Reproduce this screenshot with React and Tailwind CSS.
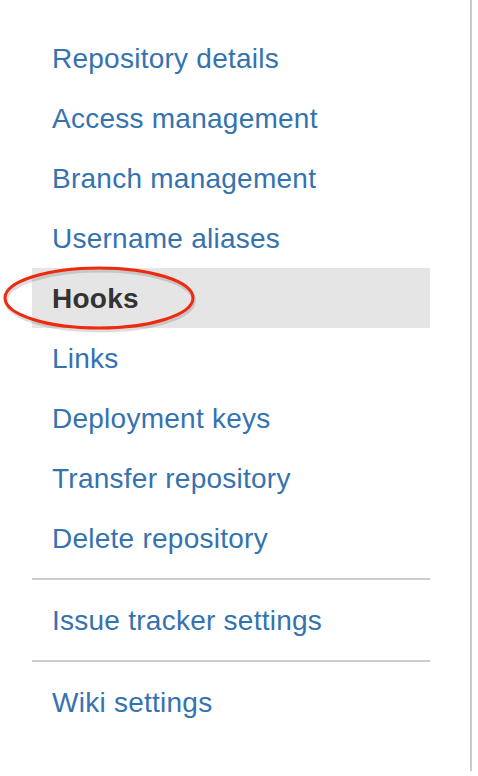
import React from "react";

const items = [
  "Repository details",
  "Access management",
  "Branch management",
  "Username aliases",
  "Hooks",
  "Links",
  "Deployment keys",
  "Transfer repository",
  "Delete repository",
];

function NavItem({ label, active }) {
  return (
    <li
      className={
        "h-[60px] flex items-center pl-5 pt-[2px] " +
        (active ? "bg-[#e5e5e5] font-bold text-[#333333]" : "text-[#3572b0]")
      }
    >
      {label}
    </li>
  );
}

export default function App() {
  return (
    <div className="min-h-screen bg-white" style={{ fontFamily: '"Liberation Sans", Arial, sans-serif' }}>
      <div className="w-[472px] h-[771px] border-r-2 border-[#cccccc] relative">
        <div className="ml-8 w-[398px] pt-7 text-[28px] leading-none tracking-[0.25px]">
          <ul>
            {items.map((label) => (
              <NavItem key={label} label={label} active={label === "Hooks"} />
            ))}
          </ul>
          <div className="mt-[10px] border-t-2 border-[#cccccc]" />
          <ul className="mt-[10px]">
            <NavItem label="Issue tracker settings" />
          </ul>
          <div className="mt-[10px] border-t-2 border-[#cccccc]" />
          <ul className="mt-[10px]">
            <NavItem label="Wiki settings" />
          </ul>
        </div>

        {/* red annotation ellipse around Hooks */}
        <svg className="absolute left-0 top-[262px]" width="204" height="74" viewBox="0 0 204 74">
          <ellipse cx="100" cy="37" rx="94" ry="30" fill="none" stroke="#00000022" strokeWidth="4" transform="translate(0 1.5)" />
          <ellipse cx="99" cy="36" rx="94" ry="30" fill="none" stroke="#ee2a0e" strokeWidth="3" />
        </svg>
      </div>
    </div>
  );
}
